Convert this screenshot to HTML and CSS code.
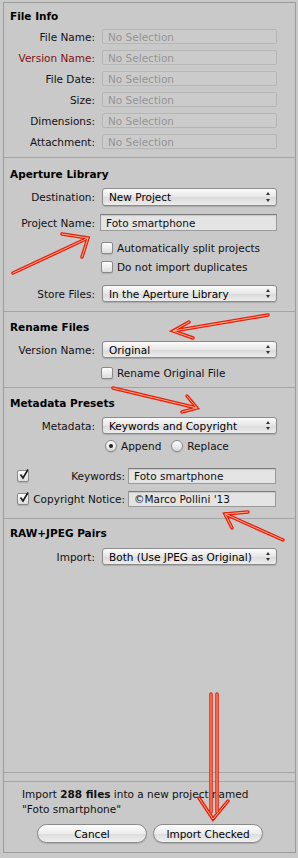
FILE: index.html
```html
<!DOCTYPE html>
<html lang="en">
<head>
    <meta charset="UTF-8">
    <meta name="viewport" content="width=device-width, initial-scale=1.0">
    <title>Import Settings</title>
    <link rel="stylesheet" href="styles.css">
</head>
<body>
    <div class="panel">
        <section class="group group-info">
            <h2 class="group-title">File Info</h2>
            <div class="row row-info first">
                <span class="label">File Name:</span>
                <span class="field field-off">No Selection</span>
            </div>
            <div class="row row-info">
                <span class="label label-red">Version Name:</span>
                <span class="field field-off">No Selection</span>
            </div>
            <div class="row row-info">
                <span class="label">File Date:</span>
                <span class="field field-off">No Selection</span>
            </div>
            <div class="row row-info">
                <span class="label">Size:</span>
                <span class="field field-off">No Selection</span>
            </div>
            <div class="row row-info">
                <span class="label">Dimensions:</span>
                <span class="field field-off">No Selection</span>
            </div>
            <div class="row row-info">
                <span class="label">Attachment:</span>
                <span class="field field-off">No Selection</span>
            </div>
        </section>

        <section class="group group-library">
            <h2 class="group-title">Aperture Library</h2>
            <div class="row row-dest">
                <span class="label">Destination:</span>
                <span class="popup">New Project</span>
            </div>
            <div class="row row-project">
                <span class="label">Project Name:</span>
                <span class="field">Foto smartphone</span>
            </div>
            <div class="option option-split">
                <span class="check"></span>Automatically split projects
            </div>
            <div class="option option-dupes">
                <span class="check"></span>Do not import duplicates
            </div>
            <div class="row row-store">
                <span class="label">Store Files:</span>
                <span class="popup">In the Aperture Library</span>
            </div>
        </section>

        <section class="group group-rename">
            <h2 class="group-title">Rename Files</h2>
            <div class="row row-version">
                <span class="label">Version Name:</span>
                <span class="popup">Original</span>
            </div>
            <div class="option option-rename">
                <span class="check"></span>Rename Original File
            </div>
        </section>

        <section class="group group-meta">
            <h2 class="group-title">Metadata Presets</h2>
            <div class="row row-meta">
                <span class="label">Metadata:</span>
                <span class="popup">Keywords and Copyright</span>
            </div>
            <div class="radios">
                <span class="radio-item"><span class="radio on"></span>Append</span>
                <span class="radio-item"><span class="radio"></span>Replace</span>
            </div>
            <div class="meta-row meta-keywords">
                <span class="check on">
                    <svg viewBox="0 0 12 12"><path d="M2.5 5.5 L5 9 L10 0.5"/></svg>
                </span>
                <span class="label">Keywords:</span>
                <span class="field">Foto smartphone</span>
            </div>
            <div class="meta-row meta-copyright">
                <span class="check on">
                    <svg viewBox="0 0 12 12"><path d="M2.5 5.5 L5 9 L10 0.5"/></svg>
                </span>
                <span class="label">Copyright Notice:</span>
                <span class="field">©Marco Pollini '13</span>
            </div>
        </section>

        <section class="group group-raw">
            <h2 class="group-title">RAW+JPEG Pairs</h2>
            <div class="row row-import">
                <span class="label">Import:</span>
                <span class="popup">Both (Use JPEG as Original)</span>
            </div>
        </section>

        <div class="spacer"></div>

        <footer class="footer">
            <p class="summary">Import <b>288 files</b> into a new project named<br>"Foto smartphone"</p>
            <div class="buttons">
                <button class="btn">Cancel</button>
                <button class="btn">Import Checked</button>
            </div>
        </footer>
    </div>

    <!-- hand-drawn red arrows on top of the screenshot -->
    <svg class="marks" width="298" height="858" viewBox="0 0 298 858">
        <g class="mark-outer">
            <path d="M13 273 L88 238 M62 234 L88 238 L82 257"/>
            <path d="M268 315 L173 331 M189 322 L173 331 L193 338"/>
            <path d="M113 388 L197 408 M187 396 L197 408 L182 412"/>
            <path d="M283 540 L225 514 M248 512 L225 514 L232 528"/>
            <path d="M211 694 L211 812 M217 694 L217 812 M199 798 L213 819 L228 801"/>
        </g>
        <g class="mark-inner">
            <path d="M13 273 L88 238 M62 234 L88 238 L82 257"/>
            <path d="M268 315 L173 331 M189 322 L173 331 L193 338"/>
            <path d="M113 388 L197 408 M187 396 L197 408 L182 412"/>
            <path d="M283 540 L225 514 M248 512 L225 514 L232 528"/>
            <path d="M211 694 L211 812 M217 694 L217 812 M199 798 L213 819 L228 801"/>
        </g>
    </svg>
</body>
</html>
```

FILE: styles.css
```css
body {
    margin: 0;
    padding: 2px 2px 0 3px;
    background-color: #c9c9c9;
    font-family: "DejaVu Sans", Verdana, sans-serif;
    font-size: 10.5px;
    color: #111;
    position: relative;
}
.panel {
    box-sizing: border-box;
    height: 851px;
    border: 1px solid #9c9c9c;
    display: flex;
    flex-direction: column;
    background-color: #c9c9c9;
}
.group {
    border-bottom: 1px solid #a4a4a4;
}
.group-title {
    margin: 0;
    padding-left: 6px;
    font-size: 10.5px;
    line-height: 14px;
    font-weight: bold;
    color: #000;
}
.group-info { padding: 6px 0 8px; }
.group-library { padding: 9px 0 9px; }
.group-rename { padding: 8px 0 7px; }
.group-meta { padding: 8px 0 11px; }
.group-raw { padding: 7px 0 0; height: 254px; box-sizing: border-box; }

.row {
    display: grid;
    grid-template-columns: 91px 175px;
    column-gap: 7px;
    align-items: center;
}
.label {
    text-align: right;
    white-space: nowrap;
}
.label-red {
    color: #7e1414;
}
.row-info { margin-top: 6px; height: 15px; }
.row-dest { margin-top: 7px; height: 18px; }
.row-project { margin-top: 8px; height: 17px; }
.row-store { margin-top: 11px; height: 17px; }
.row-version { margin-top: 7px; height: 17px; }
.row-meta { margin-top: 7px; height: 17px; }
.row-import { margin-top: 8px; height: 17px; }

.field {
    box-sizing: border-box;
    height: 100%;
    display: flex;
    align-items: center;
    padding-left: 5px;
    background-color: #e4e4e4;
    border: 1px solid #9a9a9a;
    border-top-color: #7c7c7c;
    box-shadow: inset 0 1px 1px rgba(0, 0, 0, 0.12);
    color: #111;
}
.field-off {
    background-color: #cbcbcb;
    border-color: #b6b6b6;
    border-radius: 2px;
    box-shadow: none;
    color: #959595;
}
.row-project .field {
    margin-left: -2px;
}

.popup {
    position: relative;
    box-sizing: border-box;
    height: 100%;
    display: flex;
    align-items: center;
    padding-left: 6px;
    background: linear-gradient(#fbfbfb, #e6e6e6 50%, #dadada 51%, #ececec);
    border: 1px solid #8a8a8a;
    border-radius: 3px;
    box-shadow: 0 1px 1px rgba(0, 0, 0, 0.15);
    color: #000;
}
.popup::before,
.popup::after {
    content: "";
    position: absolute;
    right: 6px;
    border-left: 2.5px solid transparent;
    border-right: 2.5px solid transparent;
}
.popup::before {
    top: 3px;
    border-bottom: 3px solid #333;
}
.popup::after {
    bottom: 3px;
    border-top: 3px solid #333;
}

.option {
    display: flex;
    align-items: center;
    height: 14px;
    padding-left: 97px;
    color: #111;
}
.option-split { margin-top: 10px; }
.option-dupes { margin-top: 5px; }
.option-rename { margin-top: 8px; }

.check {
    box-sizing: border-box;
    width: 12px;
    height: 12px;
    margin-right: 4px;
    flex: none;
    position: relative;
    background: linear-gradient(#fdfdfd, #dcdcdc);
    border: 1px solid #8a8a8a;
    border-radius: 2px;
    box-shadow: 0 1px 1px rgba(0, 0, 0, 0.12);
}
.check svg {
    position: absolute;
    left: 0;
    top: -2px;
    width: 12px;
    height: 12px;
    overflow: visible;
}
.check svg path {
    fill: none;
    stroke: #1a1a1a;
    stroke-width: 1.6;
}

.radios {
    display: flex;
    align-items: center;
    height: 14px;
    margin-top: 5px;
    padding-left: 101px;
    gap: 10px;
}
.radio-item {
    display: flex;
    align-items: center;
}
.radio {
    box-sizing: border-box;
    width: 12px;
    height: 12px;
    margin-right: 4px;
    border-radius: 50%;
    background: linear-gradient(#fdfdfd, #dadada);
    border: 1px solid #8a8a8a;
    box-shadow: 0 1px 1px rgba(0, 0, 0, 0.12);
    display: flex;
    align-items: center;
    justify-content: center;
}
.radio.on::after {
    content: "";
    width: 4px;
    height: 4px;
    border-radius: 50%;
    background-color: #222;
}

.meta-row {
    display: grid;
    grid-template-columns: 11px 94px 148px;
    column-gap: 3px;
    align-items: center;
    height: 16px;
    padding-left: 13px;
}
.meta-row .check {
    margin-right: 0;
}
.meta-row .label {
    justify-self: end;
}
.meta-keywords { margin-top: 15px; }
.meta-copyright { margin-top: 7px; }

.spacer {
    flex: 1;
}
.footer {
    border-top: 1px solid #a4a4a4;
    padding: 5px 0 9px;
}
.summary {
    margin: 0;
    padding-left: 18px;
    line-height: 15px;
    color: #111;
}
.summary b {
    font-weight: bold;
}
.buttons {
    display: flex;
    gap: 6px;
    margin-top: 7px;
    padding-left: 33px;
}
.btn {
    width: 110px;
    height: 19px;
    padding: 0;
    font-family: inherit;
    font-size: 10.5px;
    color: #000;
    background: linear-gradient(#fdfdfd, #ececec 50%, #dcdcdc 51%, #efefef);
    border: 1px solid #8a8a8a;
    border-radius: 10px;
    box-shadow: 0 1px 1px rgba(0, 0, 0, 0.15);
}

.marks {
    position: absolute;
    left: 0;
    top: 0;
    pointer-events: none;
}
.marks path {
    fill: none;
    stroke-linecap: round;
    stroke-linejoin: miter;
}
.mark-outer path {
    stroke: #ec1d0b;
    stroke-width: 3.5;
}
.mark-inner path {
    stroke: #ffb089;
    stroke-width: 1;
}
```
